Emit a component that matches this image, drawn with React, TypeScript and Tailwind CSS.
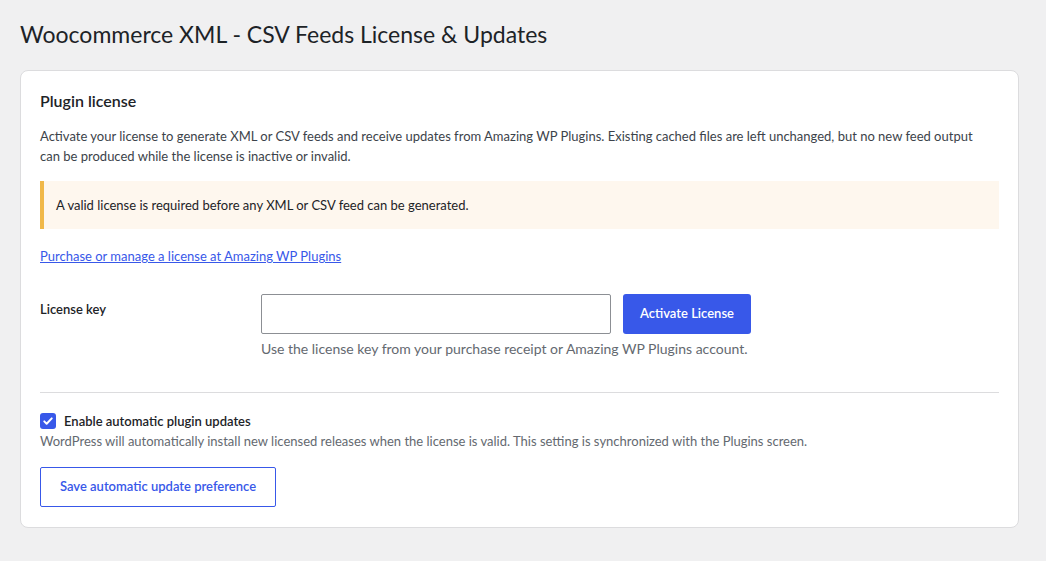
import { useState } from 'react';

const font = { fontFamily: 'Lato, "Noto Sans", sans-serif' };

function CheckIcon() {
  return (
    <svg viewBox="0 0 16 16" className="h-3 w-3" fill="none" stroke="white" strokeWidth={2.6} strokeLinecap="round" strokeLinejoin="round">
      <path d="M3 8.5l3.2 3.2L13 4.5" />
    </svg>
  );
}

export default function App() {
  const [licenseKey, setLicenseKey] = useState('');
  const [autoUpdates, setAutoUpdates] = useState(true);

  return (
    <div className="min-h-[561px] w-full bg-[#f0f0f1] pl-5 pt-[19px] text-[#1d2327]" style={font}>
      <h1 className="text-[23px] leading-[30px] font-normal">Woocommerce XML - CSV Feeds License &amp; Updates</h1>

      <div className="mt-[21px] w-[999px] rounded-lg border border-[#dcdcde] bg-white px-[19px] py-5">
        <h2 className="text-[16px] leading-5 font-semibold">Plugin license</h2>
        <p className="mt-[15px] max-w-[955px] text-[13px] leading-5 text-[#3c434a]">
          Activate your license to generate XML or CSV feeds and receive updates from Amazing WP Plugins. Existing cached files are left unchanged, but no new feed output can be produced while the license is inactive or invalid.
        </p>

        {/* warning notice */}
        <div className="mt-[15px] border-l-4 border-[#f0b849] bg-[#fef7ee] px-3 py-[14px] text-[13px] leading-5">
          A valid license is required before any XML or CSV feed can be generated.
        </div>

        <a href="#" className="mt-[17px] inline-block text-[13px] leading-5 text-[#3858e9] underline">
          Purchase or manage a license at Amazing WP Plugins
        </a>

        <div className="mt-[27px] grid grid-cols-[221px_1fr]">
          <label className="pt-[5px] text-[13px] leading-5 font-semibold">License key</label>
          <div>
            <div className="flex gap-3">
              <input
                value={licenseKey}
                onChange={(e) => setLicenseKey(e.target.value)}
                className="h-10 w-[350px] rounded-[2px] border border-[#8c8f94] px-2 text-[14px] outline-none"
              />
              <button className="h-10 w-[128px] rounded-[3px] bg-[#3858e9] text-[13px] font-semibold text-white">
                Activate License
              </button>
            </div>
            <p className="mt-[5px] text-[14px] leading-5 text-[#646970]">
              Use the license key from your purchase receipt or Amazing WP Plugins account.
            </p>
          </div>
        </div>

        <hr className="mt-[33px] border-[#dcdcde]" />

        <label className="mt-5 flex items-center gap-2 text-[13px] leading-4 font-semibold">
          <button
            type="button"
            onClick={() => setAutoUpdates(!autoUpdates)}
            className={
              autoUpdates
                ? 'flex h-4 w-4 items-center justify-center rounded-[3px] bg-[#3858e9]'
                : 'flex h-4 w-4 items-center justify-center rounded-[3px] border border-[#8c8f94] bg-white'
            }
          >
            {autoUpdates && <CheckIcon />}
          </button>
          Enable automatic plugin updates
        </label>
        <p className="mt-[2px] text-[13px] leading-5 text-[#646970]">
          WordPress will automatically install new licensed releases when the license is valid. This setting is synchronized with the Plugins screen.
        </p>

        <button className="mt-4 h-10 w-[236px] rounded-[2px] border border-[#3858e9] bg-white text-[13px] font-semibold text-[#3858e9]">
          Save automatic update preference
        </button>
      </div>
    </div>
  );
}
